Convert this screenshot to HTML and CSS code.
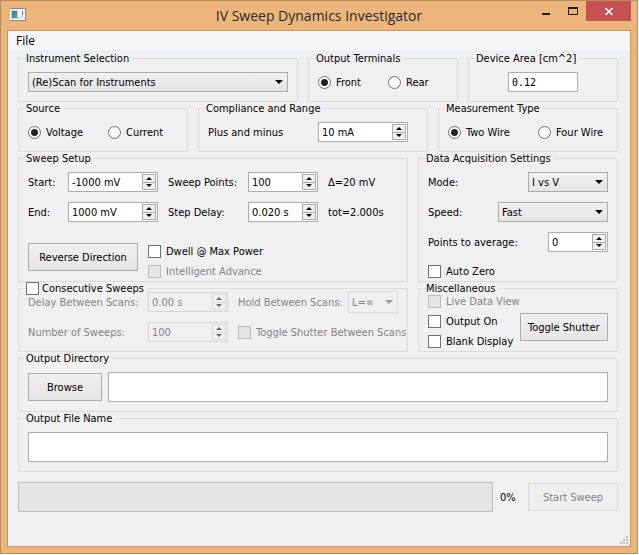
FILE: index.html
```html
<!DOCTYPE html>
<html lang="en">
<head>
<meta charset="utf-8">
<title>IV Sweep Dynamics Investigator</title>
<link rel="stylesheet" href="styles.css">
</head>
<body>
<div class="window">
  <header class="titlebar">
    <svg class="app-icon" width="16" height="14" viewBox="0 0 16 14" shape-rendering="crispEdges" aria-hidden="true">
      <defs>
        <linearGradient id="pane" x1="0" y1="0" x2="1" y2="1">
          <stop offset="0" stop-color="#4c6fa8"/><stop offset="1" stop-color="#4fb070"/>
        </linearGradient>
      </defs>
      <rect width="16" height="13" fill="#85888a"/>
      <rect x="0" y="1" width="15" height="11" fill="#fbfbfb"/>
      <rect x="1" y="2" width="7" height="9" fill="#c3cfd6"/>
      <rect x="2" y="3" width="5" height="7" fill="url(#pane)"/>
      <rect x="8" y="9" width="3" height="2" fill="#d3d6da"/>
      <rect x="12" y="3" width="1" height="4" fill="#4d7f86"/>
      <rect x="12" y="7" width="1" height="3" fill="#b9c3c8"/>
    </svg>
    <h1 class="title">IV Sweep Dynamics Investigator</h1>
    <div class="window-buttons">
      <button class="win-btn" type="button" aria-label="Minimize">
        <svg width="10" height="10" viewBox="0 0 10 10"><path d="M1 7h8v2H1z" fill="#1e1e1e"/></svg>
      </button>
      <button class="win-btn" type="button" aria-label="Maximize">
        <svg width="10" height="10" viewBox="0 0 10 10"><path fill-rule="evenodd" d="M0 1h10v8H0zM1 3v5h8V3z" fill="#1e1e1e"/></svg>
      </button>
      <button class="win-btn close" type="button" aria-label="Close">
        <svg width="10" height="10" viewBox="0 0 10 10"><path d="M1.500 2l7 7M8.500 2l-7 7" stroke="#fff" stroke-width="1.700"/></svg>
      </button>
    </div>
  </header>
  <div class="client">
    <nav class="menubar"><button class="menu" type="button">File</button></nav>
    <main class="content">
      <div class="row row-instrument">
        <fieldset class="group">
          <legend>Instrument Selection</legend>
          <div class="select"><select aria-label="Instrument"><option>(Re)Scan for Instruments</option></select></div>
        </fieldset>
        <fieldset class="group">
          <legend>Output Terminals</legend>
          <div class="radios step-70">
            <label class="check"><input type="radio" name="terminals" checked>Front</label>
            <label class="check"><input type="radio" name="terminals">Rear</label>
          </div>
        </fieldset>
        <fieldset class="group">
          <legend>Device Area [cm^2]</legend>
          <input class="field area" type="text" value="0.12" aria-label="Device area">
        </fieldset>
      </div>

      <div class="row row-source">
        <fieldset class="group">
          <legend>Source</legend>
          <div class="radios step-80">
            <label class="check"><input type="radio" name="source" checked>Voltage</label>
            <label class="check"><input type="radio" name="source">Current</label>
          </div>
        </fieldset>
        <fieldset class="group">
          <legend>Compliance and Range</legend>
          <div class="pair compliance">
            <label for="compliance">Plus and minus</label>
            <div class="spin w-90"><input id="compliance" type="text" value="10 mA"><span class="steps"><button type="button" aria-label="Increase"></button><button type="button" aria-label="Decrease"></button></span></div>
          </div>
        </fieldset>
        <fieldset class="group">
          <legend>Measurement Type</legend>
          <div class="radios step-90">
            <label class="check"><input type="radio" name="wires" checked>Two Wire</label>
            <label class="check"><input type="radio" name="wires">Four Wire</label>
          </div>
        </fieldset>
      </div>

      <div class="row row-sweep">
        <fieldset class="group tight">
          <legend>Sweep Setup</legend>
          <div class="setup">
            <label for="start">Start:</label>
            <div class="spin w-90"><input id="start" type="text" value="-1000 mV"><span class="steps"><button type="button" aria-label="Increase"></button><button type="button" aria-label="Decrease"></button></span></div>
            <label for="points">Sweep Points:</label>
            <div class="spin w-70"><input id="points" type="text" value="100"><span class="steps"><button type="button" aria-label="Increase"></button><button type="button" aria-label="Decrease"></button></span></div>
            <span>Δ=20 mV</span>
            <label for="end">End:</label>
            <div class="spin w-90"><input id="end" type="text" value="1000 mV"><span class="steps"><button type="button" aria-label="Increase"></button><button type="button" aria-label="Decrease"></button></span></div>
            <label for="delay">Step Delay:</label>
            <div class="spin w-70"><input id="delay" type="text" value="0.020 s"><span class="steps"><button type="button" aria-label="Increase"></button><button type="button" aria-label="Decrease"></button></span></div>
            <span>tot=2.000s</span>
          </div>
          <div class="direction">
            <button class="btn w-110" type="button">Reverse Direction</button>
            <div class="checks">
              <label class="check"><input type="checkbox">Dwell @ Max Power</label>
              <label class="check off"><input type="checkbox" disabled>Intelligent Advance</label>
            </div>
          </div>
        </fieldset>
        <fieldset class="group tight">
          <legend>Data Acquisition Settings</legend>
          <div class="stack">
            <div class="pair"><label for="mode">Mode:</label><div class="select w-80"><select id="mode"><option>I vs V</option></select></div></div>
            <div class="pair"><label for="speed">Speed:</label><div class="select w-110"><select id="speed"><option>Fast</option></select></div></div>
            <div class="pair"><label for="average">Points to average:</label><div class="spin w-60"><input id="average" type="text" value="0"><span class="steps"><button type="button" aria-label="Increase"></button><button type="button" aria-label="Decrease"></button></span></div></div>
            <label class="check auto-zero"><input type="checkbox">Auto Zero</label>
          </div>
        </fieldset>
      </div>

      <div class="row row-sweep">
        <fieldset class="group flush">
          <legend><label class="check"><input type="checkbox">Consecutive Sweeps</label></legend>
          <div class="consecutive off">
            <label for="between">Delay Between Scans:</label>
            <div class="spin w-80"><input id="between" type="text" value="0.00 s" disabled><span class="steps"><button type="button" aria-label="Increase" disabled></button><button type="button" aria-label="Decrease" disabled></button></span></div>
            <div class="pair"><label for="hold">Hold Between Scans:</label><div class="select hold"><select id="hold" disabled><option>L=∞</option></select></div></div>
            <label for="sweeps">Number of Sweeps:</label>
            <div class="spin w-80"><input id="sweeps" type="text" value="100" disabled><span class="steps"><button type="button" aria-label="Increase" disabled></button><button type="button" aria-label="Decrease" disabled></button></span></div>
            <label class="check off"><input type="checkbox" disabled>Toggle Shutter Between Scans</label>
          </div>
        </fieldset>
        <fieldset class="group flush">
          <legend>Miscellaneous</legend>
          <div class="misc">
            <div class="checks">
              <label class="check off"><input type="checkbox" disabled>Live Data View</label>
              <label class="check"><input type="checkbox">Output On</label>
              <label class="check"><input type="checkbox">Blank Display</label>
            </div>
            <button class="btn w-90" type="button">Toggle Shutter</button>
          </div>
        </fieldset>
      </div>

      <fieldset class="group">
        <legend>Output Directory</legend>
        <div class="directory">
          <button class="btn browse" type="button">Browse</button>
          <input class="field tall" type="text" aria-label="Output directory">
        </div>
      </fieldset>
      <fieldset class="group">
        <legend>Output File Name</legend>
        <input class="field tall" type="text" aria-label="Output file name">
      </fieldset>

      <div class="run">
        <div class="progress" role="progressbar" aria-label="Sweep progress" aria-valuenow="0" aria-valuemin="0" aria-valuemax="100"></div>
        <span class="percent">0%</span>
        <button class="btn w-90" type="button" disabled>Start Sweep</button>
      </div>
    </main>
    <footer class="statusbar">
      <svg width="8" height="8" viewBox="0 0 8 8" shape-rendering="crispEdges" aria-hidden="true"><path d="M6 0h2v2H6zM3 3h2v2H3zM6 3h2v2H6zM0 6h2v2H0zM3 6h2v2H3zM6 6h2v2H6z" fill="#bfbfbf"/></svg>
    </footer>
  </div>
</div>
</body>
</html>
```
FILE: styles.css
```css
* { box-sizing: border-box; }

body {
  margin: 0;
  min-height: 100vh;
  padding: 0 1px 1px 0;
  display: flex;
  background: #fff;
  color: #000;
  font: 11px/13px "DejaVu Sans Condensed", "DejaVu Sans", sans-serif;
}

button, input, select { font: inherit; color: inherit; margin: 0; }

.window {
  flex: 1;
  min-width: 0;
  display: flex;
  flex-direction: column;
  padding: 0 6px 6px;
  background: #ebb57c;
  border: 1px solid #b78d61;
}

/* Title bar */
.titlebar {
  display: grid;
  grid-template-columns: 1fr auto 1fr;
  height: 29px;
}
.app-icon { margin: 7px 0 0 3px; }
.title {
  margin: 0;
  align-self: center;
  font: 14px/20px "Open Sans", "Noto Sans", sans-serif;
  color: #2b2b2b;
  white-space: nowrap;
}
.window-buttons { display: flex; justify-content: flex-end; }
.win-btn {
  width: 27px;
  height: 20px;
  padding: 0;
  border: 0;
  background: none;
  display: flex;
  align-items: center;
  justify-content: center;
}
.close { width: 45px; background: #c75050; }

/* Client area */
.client {
  flex: 1;
  display: flex;
  flex-direction: column;
  background: #f0f0f0;
  border: 1px solid #c2976a;
}
.menubar { height: 21px; background: #f5f6f7; border-bottom: 1px solid #e8e9ea; }
.menu {
  display: block;
  padding: 0 8px;
  border: 0;
  background: none;
  font: 12px/20px "Open Sans", "Noto Sans", sans-serif;
}
.content { padding: 0 12px 0 10px; white-space: nowrap; }

.row { display: grid; column-gap: 10px; }
.row-instrument { grid-template-columns: 28fr 15fr 15fr; }
.row-source { grid-template-columns: 17fr 23fr 18fr; }
.row-sweep { grid-template-columns: 39fr 20fr; }

.group {
  min-width: 0;
  margin: 0;
  padding: 7px 9px 9px;
  border: 1px solid #dcdcdc;
}
.group.tight { padding-bottom: 3px; }
.group.flush { padding-top: 0; padding-bottom: 3px; }
legend { margin-left: -2px; padding: 0 3px 0 0; }

/* Text fields and drop-downs */
.field, .select select, .spin {
  height: 20px;
  border: 1px solid #abadb3;
  background: #fff;
}
.field { display: block; width: 100%; padding: 0 3px; }
.field.tall { height: 30px; }
.field.area {
  width: 70px;
  margin: 0 auto;
  font: 10px/13px "DejaVu Sans Mono", monospace;
}

.select { display: grid; align-items: center; }
.select select {
  grid-area: 1 / 1;
  width: 100%;
  padding: 0 16px 0 3px;
  appearance: none;
  border-color: #acacac;
  border-radius: 0;
  background: linear-gradient(#f0f0f0, #e5e5e5);
}
.select::after {
  content: "";
  grid-area: 1 / 1;
  justify-self: end;
  margin-right: 5px;
  border: 4px solid transparent;
  border-top-color: #000;
  border-bottom: 0;
  pointer-events: none;
}
.select select:disabled { opacity: 1; color: #838383; background: #efefef; border-color: #d9d9d9; }
.select:has(:disabled)::after { border-top-color: #9a9a9a; }
.select.hold { width: 50px; }
.hold select { height: 22px; }

/* Number boxes with step buttons */
.spin { display: flex; padding: 1px; }
.spin input {
  flex: 1;
  min-width: 0;
  padding: 1px 0 0 2px;
  border: 0;
  background: none;
}
.steps { display: flex; flex-direction: column; width: 14px; }
.steps button {
  flex: 1;
  display: flex;
  align-items: center;
  justify-content: center;
  padding: 0;
  border: 1px solid #acacac;
  background: #f0f0f0;
}
.steps button + button { border-top: 0; }
.steps button::before {
  content: "";
  border: 3px solid transparent;
  border-top: 0;
  border-bottom-color: #000;
}
.steps button + button::before {
  border-top: 3px solid #000;
  border-bottom: 0;
}
.off .spin { background: #f0f0f0; border-color: #d4d4d4; }
.off .steps button { border-color: #d9d9d9; }
.off .steps button::before { border-bottom-color: #6d6d6d; }
.off .steps button + button::before { border-top-color: #6d6d6d; }

/* Check boxes and radio buttons */
.check { display: flex; align-items: center; gap: 5px; }
legend .check { gap: 3px; }
.check input {
  flex: none;
  appearance: none;
  width: 13px;
  height: 13px;
  border: 1px solid #707070;
  background: #fff;
}
.check input[type="radio"] { border-radius: 50%; }
.check input[type="radio"]:checked { background: radial-gradient(circle, #212121 3px, #fff 4px); }
.off, .off input { color: #838383; }
.check input:disabled { border-color: #bcbcbc; background: #e6e6e6; }
.radios { display: grid; height: 20px; align-items: center; }
.step-70 { grid-template-columns: 70px 1fr; }
.step-80 { grid-template-columns: 80px 1fr; }
.step-90 { grid-template-columns: 90px 1fr; }
.checks { display: grid; gap: 7px; }

/* Push buttons */
.btn {
  height: 28px;
  padding: 0;
  border: 1px solid #acacac;
  background: linear-gradient(#f0f0f0, #e5e5e5);
}
.btn:disabled { color: #838383; background: #efefef; border-color: #d9d9d9; }

.w-60 { width: 60px; }
.w-70 { width: 70px; }
.w-80 { width: 80px; }
.w-90 { width: 90px; }
.w-110 { width: 110px; }

/* Group contents */
.pair { display: flex; align-items: center; justify-content: space-between; }
.compliance { padding-right: 10px; }
.setup {
  display: grid;
  grid-template-columns: 40px 100px 80px 80px 1fr;
  row-gap: 10px;
  align-items: center;
}
.direction { display: flex; align-items: flex-start; gap: 10px; margin-top: 21px; }
.direction .checks { margin-top: 2px; }
.stack { display: grid; gap: 10px; }
.auto-zero { margin-top: 3px; }
.consecutive {
  display: grid;
  grid-template-columns: 120px 90px 160px;
  grid-auto-rows: 20px;
  row-gap: 10px;
  align-items: center;
  margin-top: -3px;
}
.misc { display: flex; justify-content: space-between; align-items: flex-start; }
.misc .btn { margin-top: 18px; }
.directory { display: flex; align-items: center; gap: 6px; }
.browse { flex: none; width: 74px; }

.run { display: flex; align-items: center; margin-top: 10px; }
.progress { flex: 1; height: 30px; border: 1px solid #bcbcbc; background: #e6e6e6; }
.percent { width: 35px; padding-left: 7px; }

.statusbar { display: flex; justify-content: flex-end; margin-top: auto; padding: 2px; }
.statusbar svg { display: block; }
```
